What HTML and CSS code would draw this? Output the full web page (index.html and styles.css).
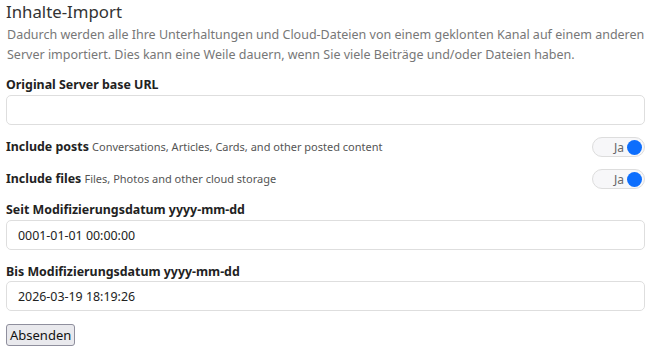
FILE: index.html
```html
<!DOCTYPE html>
<html lang="de">
<head>
    <meta charset="UTF-8">
    <title>Inhalte-Import</title>
    <link rel="stylesheet" href="styles.css">
</head>
<body>
    <div class="container">
        <h2>Inhalte-Import</h2>
        <p class="descr">Dadurch werden alle Ihre Unterhaltungen und Cloud-Dateien von einem geklonten Kanal auf einem anderen Server importiert. Dies kann eine Weile dauern, wenn Sie viele Beiträge und/oder Dateien haben.</p>
        <form action="/import_items" method="post">
            <div class="field">
                <label for="baseurl">Original Server base URL</label>
                <input type="text" id="baseurl" name="baseurl">
            </div>

            <div class="toggle-row">
                <label for="posts">Include posts <span class="help">Conversations, Articles, Cards, and other posted content</span></label>
                <div class="switch"><span class="switch-label">Ja</span><span class="knob"></span></div>
            </div>
            <div class="toggle-row">
                <label for="files">Include files <span class="help">Files, Photos and other cloud storage</span></label>
                <div class="switch"><span class="switch-label">Ja</span><span class="knob"></span></div>
            </div>

            <div class="field">
                <label for="since">Seit Modifizierungsdatum yyyy-mm-dd</label>
                <input type="text" id="since" name="since" value="0001-01-01 00:00:00">
            </div>
            <div class="field">
                <label for="until">Bis Modifizierungsdatum yyyy-mm-dd</label>
                <input type="text" id="until" name="until" value="2026-03-19 18:19:26">
            </div>

            <button type="submit">Absenden</button>
        </form>
    </div>
</body>
</html>
```

FILE: styles.css
```css
body {
    font-family: 'Noto Sans', sans-serif;
    font-size: 12.4px;
    color: #333;
    margin: 0;
    padding: 0;
    background-color: #fff;
}

.container {
    padding: 0 6px;
}

h2 {
    font-size: 16.8px;
    font-weight: 400;
    color: #333;
    margin: 0;
    padding-top: 1px;
    line-height: 21px;
}

.descr {
    color: #777;
    font-size: 12.5px;
    line-height: 20px;
    margin: 3px 0 11px 1px;
}

.field {
    margin-bottom: 11px;
}

label {
    display: block;
    font-weight: 700;
    color: #222;
    line-height: 18px;
    margin-bottom: 1px;
}

input {
    font-family: 'Noto Sans', sans-serif;
    font-size: 12.4px;
    color: #222;
    width: 100%;
    height: 30px;
    padding: 4px 11px;
    border: 1px solid #dedede;
    border-radius: 5px;
    box-sizing: border-box;
    margin: 0;
}

.field:first-child {
    margin-bottom: 12px;
}

.field:last-of-type {
    padding-top: 2px;
}

.field:last-of-type label {
    margin-bottom: 0;
}

.toggle-row {
    display: flex;
    align-items: center;
    justify-content: space-between;
    height: 20px;
    margin-bottom: 12px;
}

.toggle-row label {
    margin: 0;
}

.help {
    font-weight: 400;
    font-size: 11px;
    color: #555;
}

.switch {
    display: flex;
    align-items: center;
    justify-content: flex-end;
    width: 53px;
    height: 20px;
    border: 1px solid #ddd;
    border-radius: 11px;
    background-color: #f7f7f9;
    box-sizing: border-box;
    padding-right: 2px;
}

.switch-label {
    color: #666;
    font-size: 12px;
    margin-right: 3px;
}

.knob {
    width: 15px;
    height: 15px;
    border-radius: 50%;
    background-color: #0d6efd;
}

button {
    font-family: 'Noto Sans', sans-serif;
    font-size: 13px;
    color: #111;
    background-color: #e9e9ed;
    border: 1px solid #8f8f9d;
    border-radius: 3px;
    padding: 1px 3px;
    margin-top: 2px;
}
```
